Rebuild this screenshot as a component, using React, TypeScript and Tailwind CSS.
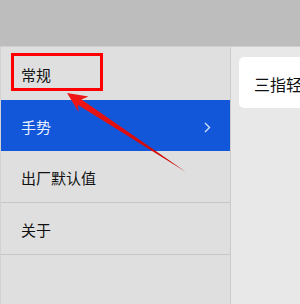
import React from "react";

export default function App() {
  const font = { fontFamily: '"Noto Sans CJK SC", "Noto Sans", sans-serif' };
  return (
    <div className="relative w-[300px] h-[304px] overflow-hidden bg-[#e6e6e6]" style={font}>
      <div className="h-[47px] bg-[#bdbdbd] border-b border-[#d0d0d0]" />
      <div className="flex h-[257px]">
        <div className="w-[231px] shrink-0 bg-[#dfdfdf] border-r border-[#cbcbcb] border-l border-l-[#d2d2d2] flex flex-col">
          <div className="h-[53px] flex items-center pl-[20px] pt-[3px] text-[15px] text-[#111]">常规</div>
          <div className="h-[51px] flex items-center justify-between pl-[20px] pr-[19px] pt-[3px] bg-[#1257d9] text-[15px] text-[#e8efff]">
            <span>手势</span>
            <svg width="7" height="11" viewBox="0 0 7 11" fill="none">
              <path d="M1 1 L5.5 5.5 L1 10" stroke="#cfe0ff" strokeWidth="1.4" />
            </svg>
          </div>
          <div className="h-[52px] flex items-center pl-[20px] pt-[3px] text-[15px] text-[#111] border-b border-[#c6c6c6]">出厂默认值</div>
          <div className="h-[52px] flex items-center pl-[20px] pt-[3px] text-[15px] text-[#111] border-b border-[#c6c6c6]">关于</div>
          <div className="flex-1" />
        </div>
        <div className="flex-1 pl-[8px] pt-[10px] bg-[#e8e8e8] overflow-hidden">
          <div className="w-[200px] h-[51px] bg-white rounded-l-[5px] flex items-center pl-[15px] pt-[3px] text-[16px] text-[#111] whitespace-nowrap">
            三指轻
          </div>
        </div>
      </div>
      <div className="absolute left-[11px] top-[53px] w-[92px] h-[38px] border-[3px] border-[#f00]" />
      <svg className="absolute left-0 top-0" width="300" height="304" viewBox="0 0 300 304">
        <defs>
          <linearGradient id="g" x1="0" y1="0" x2="1" y2="1">
            <stop offset="0" stopColor="#f21818" />
            <stop offset="1" stopColor="#c80000" />
          </linearGradient>
        </defs>
        <polygon
          points="67,93 88.5,96.5 81.5,99.5 186,172 78,105 78.5,112"
          fill="url(#g)"
        />
      </svg>
    </div>
  );
}
